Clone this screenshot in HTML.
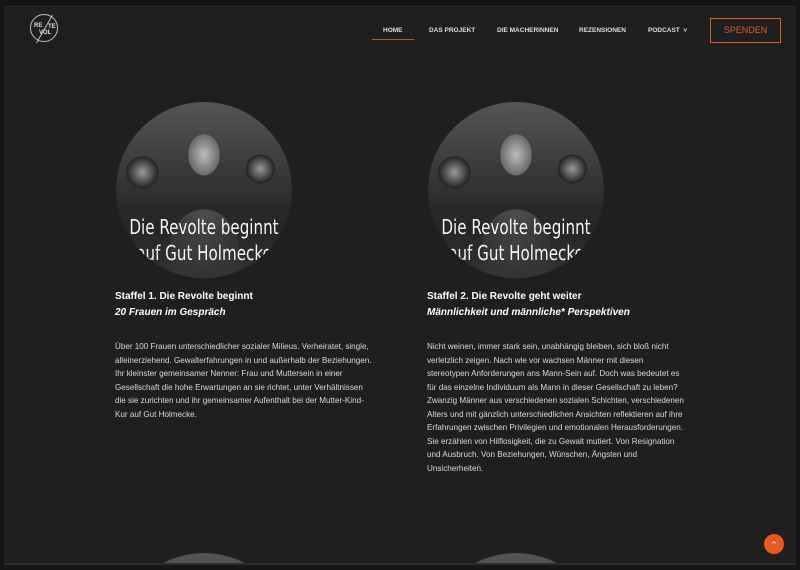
<!DOCTYPE html>
<html><head><meta charset="utf-8"><style>
*{margin:0;padding:0;box-sizing:border-box}
html,body{width:800px;height:570px;overflow:hidden;background:#151515;font-family:"Liberation Sans",sans-serif}
.frame{position:absolute;left:4px;top:6px;width:792px;height:557px;background:#1f1f1f;border-top:1px solid #2a2a2a;overflow:hidden}
.bottombar{position:absolute;left:4px;top:563px;width:792px;height:2px;background:#2c2c2c}
.logo{position:absolute;left:26px;top:7px;width:28px;height:28px;border:1px solid #bbb;border-radius:50%;color:#ddd;font-size:6px;font-weight:bold}
nav{position:absolute;top:20px;left:0;width:100%;font-size:6.5px;font-weight:bold;color:#ddd}
nav span{position:absolute}
.home{border-bottom:1px solid #c2502a;padding:0 11px 5px}
.sp{position:absolute;left:706px;top:11px;width:71px;height:25px;border:1.5px solid #e05a25;color:#e05a25;font-size:9px;text-align:center;line-height:22px}
.circ{position:absolute;width:176px;height:176px;border-radius:50%;overflow:hidden;
background:radial-gradient(ellipse 26px 34px at 50% 30%,#bdbdbd,#6a6a6a 60%,transparent 61%),
radial-gradient(ellipse 50px 60px at 50% 85%,#999,#555 70%,transparent 71%),
radial-gradient(circle 20px at 15% 40%,#999,#222 80%,transparent 81%),
radial-gradient(circle 18px at 82% 38%,#999,#222 80%,transparent 81%),
linear-gradient(#555,#2a2a2a 60%,#333);}
.circ::before{content:"";position:absolute;left:0;top:55%;width:100%;height:45%;background:linear-gradient(#1a1a1a00,#222a 40%,#333)}
.cap{position:absolute;left:-40px;width:256px;top:112px;text-align:center;color:#f4f4f4;font-family:"DejaVu Sans Condensed","Liberation Sans Narrow",sans-serif;font-size:20px;line-height:26px;white-space:nowrap;transform:scaleX(0.84)}
h3{position:absolute;color:#fff;font-size:10px;font-weight:bold;line-height:16px}
h3 i{font-weight:bold}
p{position:absolute;color:#d8d8d8;font-size:8.1px;line-height:13.5px;white-space:nowrap}
.up{position:absolute;width:20px;height:20px;border-radius:50%;background:#e85a1e;color:#fff;font-size:9px;text-align:center;line-height:22px}
</style></head><body>
<div class="frame">
<div class="logo"><span style="position:absolute;left:3px;top:8px">RE</span><span style="position:absolute;left:17px;top:9px">TE</span><span style="position:absolute;left:8px;top:15px">VOL</span><span style="position:absolute;left:13px;top:-2px;width:1px;height:32px;background:#bbb;transform:rotate(30deg)"></span></div>
<nav><span class="home" style="left:368px">HOME</span><span style="left:425px">DAS PROJEKT</span><span style="left:493px">DIE MACHERINNEN</span><span style="left:575px">REZENSIONEN</span><span style="left:644px">PODCAST &nbsp;˅</span></nav>
<div class="sp">SPENDEN</div>
<div class="circ" style="left:112px;top:95px"><div class="cap">Die Revolte beginnt<br>auf Gut Holmecke</div></div>
<div class="circ" style="left:424px;top:95px"><div class="cap">Die Revolte beginnt<br>auf Gut Holmecke</div></div>
<h3 style="left:111px;top:282px">Staffel 1. Die Revolte beginnt<br><i>20 Frauen im Gespräch</i></h3>
<h3 style="left:423px;top:282px">Staffel 2. Die Revolte geht weiter<br><i>Männlichkeit und männliche* Perspektiven</i></h3>
<p style="left:111px;top:333px">Über 100 Frauen unterschiedlicher sozialer Milieus. Verheiratet, single,<br>alleinerziehend. Gewalterfahrungen in und außerhalb der Beziehungen.<br>Ihr kleinster gemeinsamer Nenner: Frau und Muttersein in einer<br>Gesellschaft die hohe Erwartungen an sie richtet, unter Verhältnissen<br>die sie zurichten und ihr gemeinsamer Aufenthalt bei der Mutter-Kind-<br>Kur auf Gut Holmecke.</p>
<p style="left:423px;top:333px">Nicht weinen, immer stark sein, unabhängig bleiben, sich bloß nicht<br>verletzlich zeigen. Nach wie vor wachsen Männer mit diesen<br>stereotypen Anforderungen ans Mann-Sein auf. Doch was bedeutet es<br>für das einzelne Individuum als Mann in dieser Gesellschaft zu leben?<br>Zwanzig Männer aus verschiedenen sozialen Schichten, verschiedenen<br>Alters und mit gänzlich unterschiedlichen Ansichten reflektieren auf ihre<br>Erfahrungen zwischen Privilegien und emotionalen Herausforderungen.<br>Sie erzählen von Hilflosigkeit, die zu Gewalt mutiert. Von Resignation<br>und Ausbruch. Von Beziehungen, Wünschen, Ängsten und<br>Unsicherheiten.</p>
<div class="circ" style="left:112px;top:546px"></div>
<div class="circ" style="left:424px;top:546px"></div>
<div class="up" style="left:760px;top:527px">⌃</div>
</div>
<div class="bottombar"></div>
</body></html>
